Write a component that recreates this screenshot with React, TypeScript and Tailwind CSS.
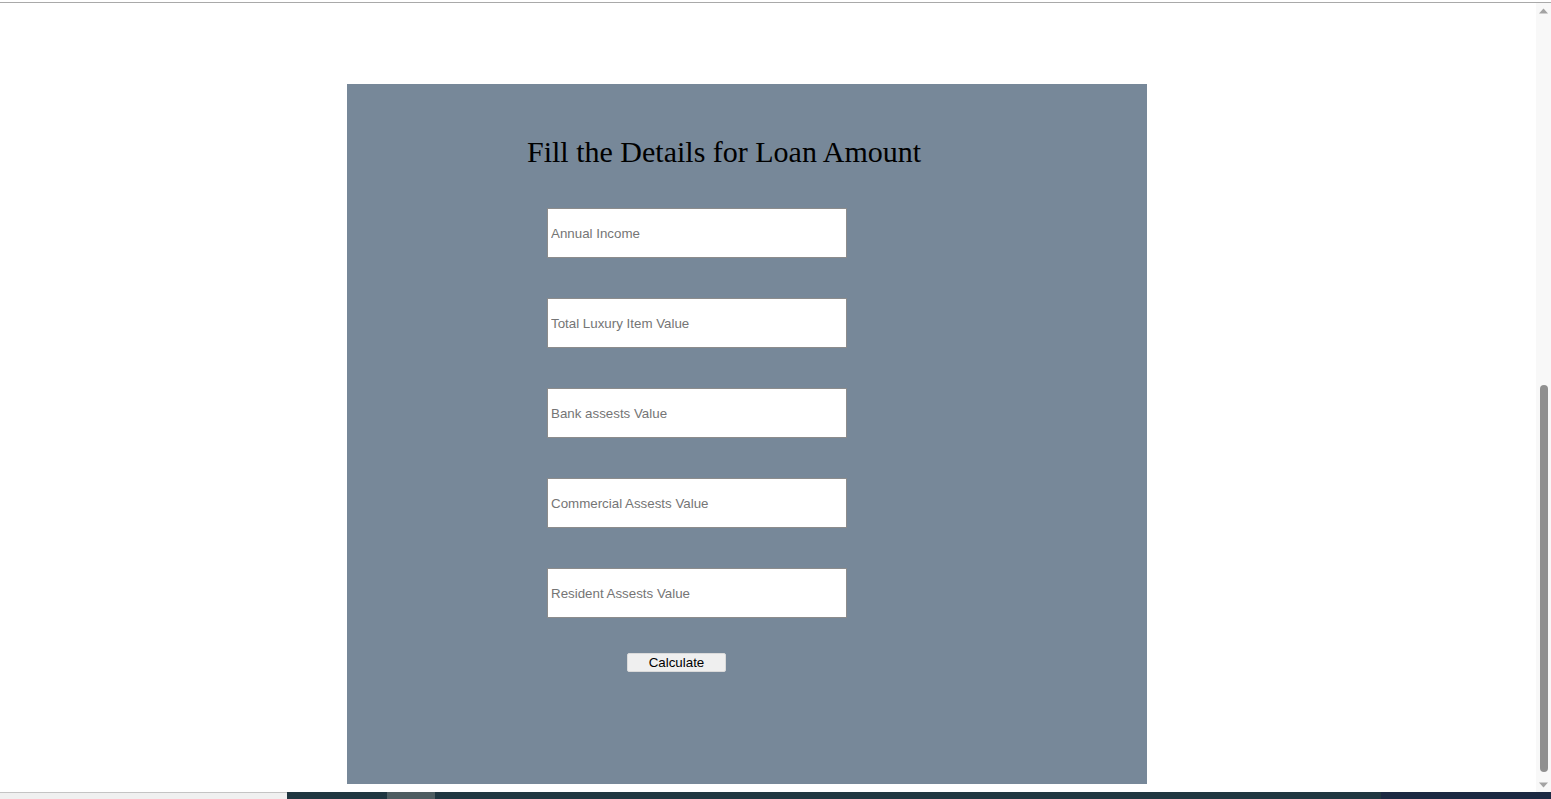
import type React from "react"

const fields = [
  "Annual Income",
  "Total Luxury Item Value",
  "Bank assests Value",
  "Commercial Assests Value",
  "Resident Assests Value",
]

function Scrollbar() {
  return (
    <div className="w-[15px] flex flex-col items-center bg-[#f8f8f8]">
      <svg width="9" height="6" viewBox="0 0 9 6" className="mt-[5px]">
        <path d="M0 5.5 L4.5 0.5 L9 5.5 Z" fill="#a3a3a3" />
      </svg>
      <div className="flex-1 w-full flex flex-col items-center pt-[371px] pb-[10px]">
        <div className="w-[8px] flex-1 rounded-full bg-[#909090]" />
      </div>
      <svg width="9" height="6" viewBox="0 0 9 6" className="mb-[4px]">
        <path d="M0 0.5 L9 0.5 L4.5 5.5 Z" fill="#a3a3a3" />
      </svg>
    </div>
  )
}

function Taskbar() {
  return (
    <div className="h-[7px] flex">
      <div className="w-[287px] bg-[#f0f0f0] border-t border-[#c4c4c4]" />
      <div className="w-[100px] bg-[#1f3640]" />
      <div className="w-[48px] bg-[#4e5d61]" />
      <div className="flex-1 bg-[#1f3640]" />
      <div className="w-[170px] bg-[#1b2942]" />
    </div>
  )
}

export default function App() {
  const handleSubmit = (e: React.FormEvent) => {
    e.preventDefault()
  }

  return (
    <div className="h-[799px] flex flex-col bg-white overflow-hidden">
      <div className="h-[3px] border-b border-[#a9a9a9]" />
      <div className="flex flex-1 min-h-0">
        <main className="flex-1 pt-[81px] pl-[347px]">
          {/* Loan form panel */}
          <form
            onSubmit={handleSubmit}
            className="w-[800px] h-[700px] bg-[#778899] flex flex-col items-start pt-[50px]"
          >
            <h1 className="ml-[180px] text-[30px] leading-[35px] text-black font-['Liberation_Serif',serif]">
              Fill the Details for Loan Amount
            </h1>

            <div className="ml-[200px] mt-[39px] flex flex-col gap-[40px]">
              {fields.map((f) => (
                <input
                  key={f}
                  type="text"
                  placeholder={f}
                  className="w-[300px] h-[50px] px-[3px] bg-white border border-[#8c8c8c] text-[13.333px] text-black placeholder:text-[#757575] font-['Liberation_Sans',Arial,sans-serif] outline-none"
                />
              ))}
            </div>

            <button
              type="submit"
              className="ml-[280px] mt-[35px] w-[99px] h-[19px] bg-[#efefef] border border-[#dadada] rounded-[2px] text-[13.333px] leading-[17px] text-black font-['Liberation_Sans',Arial,sans-serif]"
            >
              Calculate
            </button>
          </form>
        </main>
        <Scrollbar />
      </div>
      <Taskbar />
    </div>
  )
}
